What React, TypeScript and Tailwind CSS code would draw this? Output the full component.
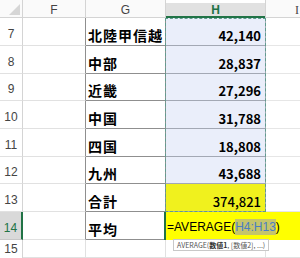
import React from 'react'

const rows = [
  { n: '7', label: '北陸甲信越', value: '42,140', h: 'h-[28px]' },
  { n: '8', label: '中部', value: '28,837', h: 'h-[28px]' },
  { n: '9', label: '近畿', value: '27,296', h: 'h-[27px]' },
  { n: '10', label: '中国', value: '31,788', h: 'h-[28px]' },
  { n: '11', label: '四国', value: '18,808', h: 'h-[28px]' },
  { n: '12', label: '九州', value: '43,688', h: 'h-[27px]' },
]

const jp = { fontFamily: '"Noto Sans CJK JP", "Noto Sans", sans-serif' }
const latin = { fontFamily: '"Liberation Sans", Arial, sans-serif' }

function RowNum({ n, active }: { n: string; active?: boolean }) {
  return (
    <div
      className={`flex items-end justify-center pb-[2px] text-[12px] border-b ${
        active
          ? 'bg-[#d9d9d9] text-[#217346] border-b-[#c6c6c6] border-r-2 border-r-[#217346]'
          : 'text-[#444] border-b-[#e1e1e1] border-r border-r-[#d4d4d4]'
      }`}
      style={latin}
    >
      {n}
    </div>
  )
}

export default function App() {
  return (
    <div className="w-[300px] h-[258px] overflow-hidden bg-white text-black">
      <div className="relative grid grid-cols-[23px_63px_80px_100px_34px]">
        {/* header row */}
        <div className="h-[18px] border-r border-b border-[#d4d4d4] bg-[#fafafa] flex items-end justify-end pr-[2px] pb-[2px]">
          <svg width="11" height="11" viewBox="0 0 11 11">
            <polygon points="11,0 11,11 0,11" fill="#d6d6d6" />
          </svg>
        </div>
        <div className="h-[18px] border-r border-b border-[#d4d4d4] bg-[#fafafa] flex items-center justify-center pt-[3px] text-[12px] text-[#444]" style={latin}>F</div>
        <div className="h-[18px] border-r border-b border-[#d4d4d4] bg-[#fafafa] flex items-center justify-center pt-[3px] text-[12px] text-[#444]" style={latin}>G</div>
        <div className="h-[18px] bg-white pt-[3px] border-r border-[#d4d4d4]">
          <div className="h-[15px] bg-[#e1e1e1] border-b-2 border-[#217346] flex items-center justify-center text-[12px] font-bold text-[#217346]" style={latin}>H</div>
        </div>
        <div className="h-[18px] border-b border-[#d4d4d4] bg-[#fafafa] flex items-center justify-end pr-[1px] pt-[3px] text-[12px] text-[#444]" style={{ fontFamily: '"Liberation Serif", serif' }}>I</div>

        {rows.map((r) => (
          <React.Fragment key={r.n}>
            <div className={`${r.h} grid`}>
              <RowNum n={r.n} />
            </div>
            <div className={`${r.h} border-r border-r-[#8f8f8f] border-b border-b-[#e1e1e1]`} />
            <div className={`${r.h} border-r border-b border-[#8f8f8f] flex items-end pl-[2px] pb-[3px] text-[14px] font-bold tracking-[1px] leading-none`} style={jp}>
              {r.label}
            </div>
            <div className={`${r.h} bg-[#eaeefa] border-r border-b border-[#a3a8b4] flex items-end justify-end pr-[4px] pb-[3px] text-[13px] font-semibold leading-none`} style={jp}>
              {r.value}
            </div>
            <div className={`${r.h} border-b border-[#e6e6e6]`} />
          </React.Fragment>
        ))}

        {/* row 13 */}
        <div className="h-[28px] grid"><RowNum n="13" /></div>
        <div className="h-[28px] border-r border-r-[#8f8f8f] border-b border-b-[#e1e1e1]" />
        <div className="h-[28px] border-r border-b border-[#8f8f8f] flex items-end pl-[2px] pb-[3px] text-[14px] font-bold tracking-[1px] leading-none" style={jp}>合計</div>
        <div className="h-[28px] bg-[#f0f11e] border-r border-b border-[#a3a8b4] flex items-end justify-end pr-[4px] pb-[3px] text-[13px] font-medium leading-none" style={jp}>374,821</div>
        <div className="h-[28px] border-b border-[#e6e6e6]" />

        {/* row 14 */}
        <div className="h-[28px] grid"><RowNum n="14" active /></div>
        <div className="h-[28px] border-r border-r-[#8f8f8f] border-b border-b-[#e1e1e1]" />
        <div className="h-[28px] border-r border-b border-[#8f8f8f] flex items-end pl-[2px] pb-[3px] text-[14px] font-bold tracking-[1px] leading-none" style={jp}>平均</div>
        <div className="col-span-2 h-[28px] bg-[#ffff00] border-l-2 border-[#217346] -ml-[2px] flex items-center pl-[1px] pt-[2px] text-[12px] leading-none" style={latin}>
          <span>=AVERAGE(</span>
          <span className="bg-[#c5c56a] text-[#4a7ec4] py-[2px]">H4:H13</span>
          <span>)</span>
        </div>

        {/* row 15 */}
        <div className="h-[18px] grid"><RowNum n="15" /></div>
        <div className="h-[18px] border-r border-b border-[#e1e1e1]" />
        <div className="h-[18px] border-r border-b border-[#e1e1e1]" />
        <div className="h-[18px] border-r border-b border-[#e1e1e1]" />
        <div className="h-[18px] border-b border-[#e1e1e1]" />

        {/* reference range marching ants */}
        <div className="absolute left-[165px] top-[18px] w-[101px] h-[194px] border border-dashed border-[#5e9c8e] pointer-events-none" />

        {/* function tooltip */}
        <div className="absolute left-[173px] top-[239px] bg-white border border-[#c8c8c8] px-[3px] h-[12px] flex items-center text-[7px] text-[#555] whitespace-nowrap" style={jp}>
          AVERAGE(<b className="text-[#333]">数値1</b>, [数値2], ...)
        </div>
      </div>
    </div>
  )
}
